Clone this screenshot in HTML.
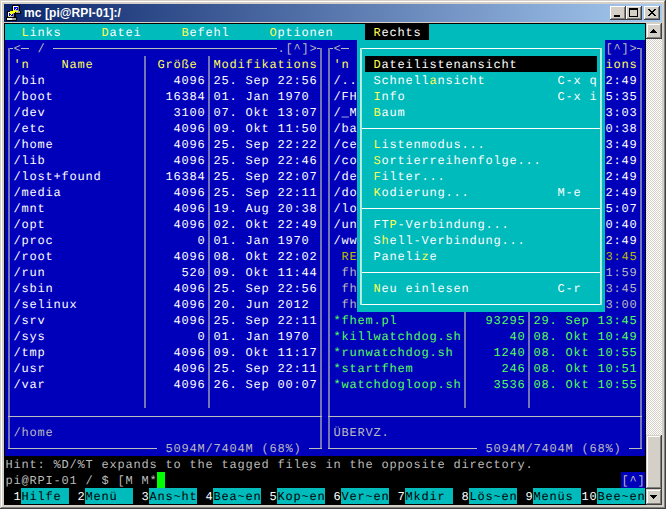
<!DOCTYPE html><html><head><meta charset="utf-8"><style>
*{margin:0;padding:0;box-sizing:border-box}
html,body{width:666px;height:509px;overflow:hidden;background:#D4D0C8}
.a{position:absolute}
.t{position:absolute;height:16px;overflow:hidden;white-space:pre;font-family:"Liberation Mono",monospace;font-size:12px;letter-spacing:0.8px;text-rendering:geometricPrecision;line-height:18px;text-indent:0.4px}
</style></head><body>

<div class="a" style="left:1px;top:1px;width:664px;height:1px;background:#fff"></div>
<div class="a" style="left:1px;top:1px;width:1px;height:506px;background:#fff"></div>
<div class="a" style="left:665px;top:0;width:1px;height:509px;background:#404040"></div>
<div class="a" style="left:0;top:508px;width:666px;height:1px;background:#404040"></div>
<div class="a" style="left:664px;top:1px;width:1px;height:507px;background:#808080"></div>
<div class="a" style="left:1px;top:507px;width:664px;height:1px;background:#808080"></div>
<div class="a" style="left:4px;top:4px;width:658px;height:18px;background:linear-gradient(to right,#0A246A,#A6CAF0)"></div>
<div class="a" style="left:24px;top:4px;height:18px;line-height:18px;font-family:'Liberation Sans',sans-serif;font-weight:bold;font-size:12px;letter-spacing:0.08px;color:#fff;white-space:pre">mc [pi@RPI-01]:/</div>
<svg class="a" style="left:0;top:0" width="24" height="24" viewBox="0 0 24 24" shape-rendering="crispEdges"><rect x="12" y="5" width="8" height="9" fill="#000"/><rect x="15" y="11" width="6" height="3" fill="#000"/><rect x="13" y="6" width="6" height="5" fill="#c0c0c0"/><rect x="13" y="6" width="5" height="1" fill="#fff"/><rect x="13" y="6" width="1" height="4" fill="#fff"/><rect x="18" y="6" width="1" height="5" fill="#808080"/><rect x="14" y="7" width="4" height="3" fill="#0000ff"/><rect x="16" y="11" width="4" height="2" fill="#a0a0a0"/><rect x="7" y="11" width="9" height="7" fill="#000"/><rect x="6" y="17" width="11" height="4" fill="#000"/><rect x="8" y="12" width="6" height="5" fill="#c0c0c0"/><rect x="8" y="12" width="5" height="1" fill="#fff"/><rect x="8" y="12" width="1" height="4" fill="#fff"/><rect x="13" y="12" width="1" height="5" fill="#808080"/><rect x="9" y="13" width="4" height="3" fill="#0000ff"/><rect x="7" y="18" width="5" height="2" fill="#f0f0f0"/><rect x="12" y="18" width="4" height="2" fill="#a0a0a0"/><rect x="16" y="8" width="1" height="1" fill="#ffff00"/><rect x="15" y="9" width="1" height="1" fill="#ffff00"/><rect x="13" y="10" width="2" height="1" fill="#ffff00"/><rect x="10" y="11" width="8" height="1" fill="#ffff00"/><rect x="10" y="12" width="5" height="1" fill="#ffff00"/><rect x="10" y="13" width="3" height="1" fill="#ffff00"/><rect x="11" y="14" width="1" height="1" fill="#ffff00"/><rect x="10" y="15" width="1" height="1" fill="#ffff00"/><rect x="9" y="16" width="1" height="1" fill="#ffff00"/></svg>
<div class="a" style="left:610px;top:6px;width:16px;height:14px;background:#D4D0C8;box-shadow:inset -1px -1px #404040,inset 1px 1px #fff,inset -2px -2px #808080,inset 2px 2px #D4D0C8"><div class="a" style="left:4px;top:9px;width:6px;height:2px;background:#000"></div></div>
<div class="a" style="left:626px;top:6px;width:16px;height:14px;background:#D4D0C8;box-shadow:inset -1px -1px #404040,inset 1px 1px #fff,inset -2px -2px #808080,inset 2px 2px #D4D0C8"><div class="a" style="left:3px;top:2px;width:9px;height:9px;border:1px solid #000;border-top-width:2px"></div></div>
<div class="a" style="left:644px;top:6px;width:16px;height:14px;background:#D4D0C8;box-shadow:inset -1px -1px #404040,inset 1px 1px #fff,inset -2px -2px #808080,inset 2px 2px #D4D0C8"><svg class="a" style="left:4px;top:3px" width="8" height="7" shape-rendering="crispEdges" fill="#000"><rect x="0" y="0" width="1" height="1"/><rect x="1" y="0" width="1" height="1"/><rect x="6" y="0" width="1" height="1"/><rect x="7" y="0" width="1" height="1"/><rect x="1" y="1" width="1" height="1"/><rect x="2" y="1" width="1" height="1"/><rect x="5" y="1" width="1" height="1"/><rect x="6" y="1" width="1" height="1"/><rect x="2" y="2" width="1" height="1"/><rect x="3" y="2" width="1" height="1"/><rect x="4" y="2" width="1" height="1"/><rect x="5" y="2" width="1" height="1"/><rect x="3" y="3" width="1" height="1"/><rect x="4" y="3" width="1" height="1"/><rect x="2" y="4" width="1" height="1"/><rect x="3" y="4" width="1" height="1"/><rect x="4" y="4" width="1" height="1"/><rect x="5" y="4" width="1" height="1"/><rect x="1" y="5" width="1" height="1"/><rect x="2" y="5" width="1" height="1"/><rect x="5" y="5" width="1" height="1"/><rect x="6" y="5" width="1" height="1"/><rect x="0" y="6" width="1" height="1"/><rect x="1" y="6" width="1" height="1"/><rect x="6" y="6" width="1" height="1"/><rect x="7" y="6" width="1" height="1"/></svg></div>
<div class="a" style="left:4px;top:23px;width:642px;height:482px;background:#000"></div>
<div class="a" style="left:5px;top:24px;width:16px;height:16px;background:#00BBBB"></div>
<div class="t" style="left:21px;top:24px;width:8px;background:#00BBBB;color:#FFFF55">L</div>
<div class="t" style="left:29px;top:24px;width:72px;background:#00BBBB;color:#FFFFFF">inks     </div>
<div class="t" style="left:101px;top:24px;width:8px;background:#00BBBB;color:#FFFF55">D</div>
<div class="t" style="left:109px;top:24px;width:72px;background:#00BBBB;color:#FFFFFF">atei     </div>
<div class="t" style="left:181px;top:24px;width:8px;background:#00BBBB;color:#FFFF55">B</div>
<div class="t" style="left:189px;top:24px;width:80px;background:#00BBBB;color:#FFFFFF">efehl     </div>
<div class="t" style="left:269px;top:24px;width:8px;background:#00BBBB;color:#FFFF55">O</div>
<div class="t" style="left:277px;top:24px;width:88px;background:#00BBBB;color:#FFFFFF">ptionen    </div>
<div class="a" style="left:365px;top:24px;width:8px;height:16px;background:#000000"></div>
<div class="t" style="left:373px;top:24px;width:8px;background:#000000;color:#FFFF55">R</div>
<div class="t" style="left:381px;top:24px;width:48px;background:#000000;color:#FFFFFF">echts </div>
<div class="a" style="left:429px;top:24px;width:216px;height:16px;background:#00BBBB"></div>
<div class="t" style="left:5px;top:40px;width:352px;background:#0000BB;color:#BBBBBB"> &lt;  /                             .[^]&gt;  &lt;  </div>
<div class="a" style="left:357px;top:40px;width:248px;height:16px;background:#00BBBB"></div>
<div class="t" style="left:605px;top:40px;width:40px;background:#0000BB;color:#BBBBBB">[^]&gt; </div>
<div class="a" style="left:5px;top:56px;width:8px;height:16px;background:#0000BB"></div>
<div class="t" style="left:13px;top:56px;width:344px;background:#0000BB;color:#FFFF55">'n    Name        Größe  Modifikations  'n </div>
<div class="a" style="left:357px;top:56px;width:8px;height:16px;background:#00BBBB"></div>
<div class="a" style="left:365px;top:56px;width:8px;height:16px;background:#000000"></div>
<div class="t" style="left:373px;top:56px;width:8px;background:#000000;color:#FFFF55">D</div>
<div class="t" style="left:381px;top:56px;width:216px;background:#000000;color:#FFFFFF">ateilistenansicht          </div>
<div class="a" style="left:597px;top:56px;width:8px;height:16px;background:#00BBBB"></div>
<div class="t" style="left:605px;top:56px;width:40px;background:#0000BB;color:#FFFF55">ions </div>
<div class="a" style="left:5px;top:72px;width:8px;height:16px;background:#0000BB"></div>
<div class="t" style="left:13px;top:72px;width:344px;background:#0000BB;color:#FFFFFF">/bin                4096 25. Sep 22:56  /..</div>
<div class="a" style="left:357px;top:72px;width:16px;height:16px;background:#00BBBB"></div>
<div class="t" style="left:373px;top:72px;width:56px;background:#00BBBB;color:#FFFFFF">Schnell</div>
<div class="t" style="left:429px;top:72px;width:8px;background:#00BBBB;color:#FFFF55">a</div>
<div class="t" style="left:437px;top:72px;width:168px;background:#00BBBB;color:#FFFFFF">nsicht         C-x q </div>
<div class="t" style="left:605px;top:72px;width:40px;background:#0000BB;color:#FFFFFF">2:49 </div>
<div class="a" style="left:5px;top:88px;width:8px;height:16px;background:#0000BB"></div>
<div class="t" style="left:13px;top:88px;width:344px;background:#0000BB;color:#FFFFFF">/boot              16384 01. Jan 1970   /FH</div>
<div class="a" style="left:357px;top:88px;width:16px;height:16px;background:#00BBBB"></div>
<div class="t" style="left:373px;top:88px;width:8px;background:#00BBBB;color:#FFFF55">I</div>
<div class="t" style="left:381px;top:88px;width:224px;background:#00BBBB;color:#FFFFFF">nfo                   C-x i </div>
<div class="t" style="left:605px;top:88px;width:40px;background:#0000BB;color:#FFFFFF">5:35 </div>
<div class="a" style="left:5px;top:104px;width:8px;height:16px;background:#0000BB"></div>
<div class="t" style="left:13px;top:104px;width:344px;background:#0000BB;color:#FFFFFF">/dev                3100 07. Okt 13:07  /_M</div>
<div class="a" style="left:357px;top:104px;width:16px;height:16px;background:#00BBBB"></div>
<div class="t" style="left:373px;top:104px;width:8px;background:#00BBBB;color:#FFFF55">B</div>
<div class="t" style="left:381px;top:104px;width:224px;background:#00BBBB;color:#FFFFFF">aum                         </div>
<div class="t" style="left:605px;top:104px;width:40px;background:#0000BB;color:#FFFFFF">3:03 </div>
<div class="a" style="left:5px;top:120px;width:8px;height:16px;background:#0000BB"></div>
<div class="t" style="left:13px;top:120px;width:344px;background:#0000BB;color:#FFFFFF">/etc                4096 09. Okt 11:50  /ba</div>
<div class="a" style="left:357px;top:120px;width:248px;height:16px;background:#00BBBB"></div>
<div class="t" style="left:605px;top:120px;width:40px;background:#0000BB;color:#FFFFFF">0:38 </div>
<div class="a" style="left:5px;top:136px;width:8px;height:16px;background:#0000BB"></div>
<div class="t" style="left:13px;top:136px;width:344px;background:#0000BB;color:#FFFFFF">/home               4096 25. Sep 22:22  /ce</div>
<div class="a" style="left:357px;top:136px;width:16px;height:16px;background:#00BBBB"></div>
<div class="t" style="left:373px;top:136px;width:8px;background:#00BBBB;color:#FFFF55">L</div>
<div class="t" style="left:381px;top:136px;width:224px;background:#00BBBB;color:#FFFFFF">istenmodus...               </div>
<div class="t" style="left:605px;top:136px;width:40px;background:#0000BB;color:#FFFFFF">3:49 </div>
<div class="a" style="left:5px;top:152px;width:8px;height:16px;background:#0000BB"></div>
<div class="t" style="left:13px;top:152px;width:344px;background:#0000BB;color:#FFFFFF">/lib                4096 25. Sep 22:46  /co</div>
<div class="a" style="left:357px;top:152px;width:16px;height:16px;background:#00BBBB"></div>
<div class="t" style="left:373px;top:152px;width:8px;background:#00BBBB;color:#FFFF55">S</div>
<div class="t" style="left:381px;top:152px;width:224px;background:#00BBBB;color:#FFFFFF">ortierreihenfolge...        </div>
<div class="t" style="left:605px;top:152px;width:40px;background:#0000BB;color:#FFFFFF">2:49 </div>
<div class="a" style="left:5px;top:168px;width:8px;height:16px;background:#0000BB"></div>
<div class="t" style="left:13px;top:168px;width:344px;background:#0000BB;color:#FFFFFF">/lost+found        16384 25. Sep 22:07  /de</div>
<div class="a" style="left:357px;top:168px;width:16px;height:16px;background:#00BBBB"></div>
<div class="t" style="left:373px;top:168px;width:8px;background:#00BBBB;color:#FFFF55">F</div>
<div class="t" style="left:381px;top:168px;width:224px;background:#00BBBB;color:#FFFFFF">ilter...                    </div>
<div class="t" style="left:605px;top:168px;width:40px;background:#0000BB;color:#FFFFFF">2:49 </div>
<div class="a" style="left:5px;top:184px;width:8px;height:16px;background:#0000BB"></div>
<div class="t" style="left:13px;top:184px;width:344px;background:#0000BB;color:#FFFFFF">/media              4096 25. Sep 22:11  /do</div>
<div class="a" style="left:357px;top:184px;width:16px;height:16px;background:#00BBBB"></div>
<div class="t" style="left:373px;top:184px;width:8px;background:#00BBBB;color:#FFFF55">K</div>
<div class="t" style="left:381px;top:184px;width:224px;background:#00BBBB;color:#FFFFFF">odierung...           M-e   </div>
<div class="t" style="left:605px;top:184px;width:40px;background:#0000BB;color:#FFFFFF">2:49 </div>
<div class="a" style="left:5px;top:200px;width:8px;height:16px;background:#0000BB"></div>
<div class="t" style="left:13px;top:200px;width:344px;background:#0000BB;color:#FFFFFF">/mnt                4096 19. Aug 20:38  /lo</div>
<div class="a" style="left:357px;top:200px;width:248px;height:16px;background:#00BBBB"></div>
<div class="t" style="left:605px;top:200px;width:40px;background:#0000BB;color:#FFFFFF">5:07 </div>
<div class="a" style="left:5px;top:216px;width:8px;height:16px;background:#0000BB"></div>
<div class="t" style="left:13px;top:216px;width:344px;background:#0000BB;color:#FFFFFF">/opt                4096 02. Okt 22:49  /un</div>
<div class="a" style="left:357px;top:216px;width:16px;height:16px;background:#00BBBB"></div>
<div class="t" style="left:373px;top:216px;width:16px;background:#00BBBB;color:#FFFFFF">FT</div>
<div class="t" style="left:389px;top:216px;width:8px;background:#00BBBB;color:#FFFF55">P</div>
<div class="t" style="left:397px;top:216px;width:208px;background:#00BBBB;color:#FFFFFF">-Verbindung...            </div>
<div class="t" style="left:605px;top:216px;width:40px;background:#0000BB;color:#FFFFFF">0:40 </div>
<div class="a" style="left:5px;top:232px;width:8px;height:16px;background:#0000BB"></div>
<div class="t" style="left:13px;top:232px;width:344px;background:#0000BB;color:#FFFFFF">/proc                  0 01. Jan 1970   /ww</div>
<div class="a" style="left:357px;top:232px;width:16px;height:16px;background:#00BBBB"></div>
<div class="t" style="left:373px;top:232px;width:8px;background:#00BBBB;color:#FFFFFF">S</div>
<div class="t" style="left:381px;top:232px;width:8px;background:#00BBBB;color:#FFFF55">h</div>
<div class="t" style="left:389px;top:232px;width:216px;background:#00BBBB;color:#FFFFFF">ell-Verbindung...          </div>
<div class="t" style="left:605px;top:232px;width:40px;background:#0000BB;color:#FFFFFF">2:49 </div>
<div class="a" style="left:5px;top:248px;width:8px;height:16px;background:#0000BB"></div>
<div class="t" style="left:13px;top:248px;width:328px;background:#0000BB;color:#FFFFFF">/root               4096 08. Okt 22:02   </div>
<div class="t" style="left:341px;top:248px;width:16px;background:#0000BB;color:#BBBB00">RE</div>
<div class="a" style="left:357px;top:248px;width:16px;height:16px;background:#00BBBB"></div>
<div class="t" style="left:373px;top:248px;width:48px;background:#00BBBB;color:#FFFFFF">Paneli</div>
<div class="t" style="left:421px;top:248px;width:8px;background:#00BBBB;color:#FFFF55">z</div>
<div class="t" style="left:429px;top:248px;width:176px;background:#00BBBB;color:#FFFFFF">e                     </div>
<div class="t" style="left:605px;top:248px;width:40px;background:#0000BB;color:#BBBB00">3:45 </div>
<div class="a" style="left:5px;top:264px;width:8px;height:16px;background:#0000BB"></div>
<div class="t" style="left:13px;top:264px;width:328px;background:#0000BB;color:#FFFFFF">/run                 520 09. Okt 11:44   </div>
<div class="t" style="left:341px;top:264px;width:16px;background:#0000BB;color:#BBBBBB">fh</div>
<div class="a" style="left:357px;top:264px;width:248px;height:16px;background:#00BBBB"></div>
<div class="t" style="left:605px;top:264px;width:40px;background:#0000BB;color:#BBBBBB">1:59 </div>
<div class="a" style="left:5px;top:280px;width:8px;height:16px;background:#0000BB"></div>
<div class="t" style="left:13px;top:280px;width:328px;background:#0000BB;color:#FFFFFF">/sbin               4096 25. Sep 22:56   </div>
<div class="t" style="left:341px;top:280px;width:16px;background:#0000BB;color:#BBBBBB">fh</div>
<div class="a" style="left:357px;top:280px;width:16px;height:16px;background:#00BBBB"></div>
<div class="t" style="left:373px;top:280px;width:8px;background:#00BBBB;color:#FFFF55">N</div>
<div class="t" style="left:381px;top:280px;width:224px;background:#00BBBB;color:#FFFFFF">eu einlesen           C-r   </div>
<div class="t" style="left:605px;top:280px;width:40px;background:#0000BB;color:#BBBBBB">3:45 </div>
<div class="a" style="left:5px;top:296px;width:8px;height:16px;background:#0000BB"></div>
<div class="t" style="left:13px;top:296px;width:328px;background:#0000BB;color:#FFFFFF">/selinux            4096 20. Jun 2012    </div>
<div class="t" style="left:341px;top:296px;width:16px;background:#0000BB;color:#BBBBBB">fh</div>
<div class="a" style="left:357px;top:296px;width:248px;height:16px;background:#00BBBB"></div>
<div class="t" style="left:605px;top:296px;width:40px;background:#0000BB;color:#BBBBBB">3:00 </div>
<div class="a" style="left:5px;top:312px;width:8px;height:16px;background:#0000BB"></div>
<div class="t" style="left:13px;top:312px;width:320px;background:#0000BB;color:#FFFFFF">/srv                4096 25. Sep 22:11  </div>
<div class="t" style="left:333px;top:312px;width:312px;background:#0000BB;color:#55FF55">*fhem.pl           93295 29. Sep 13:45 </div>
<div class="a" style="left:5px;top:328px;width:8px;height:16px;background:#0000BB"></div>
<div class="t" style="left:13px;top:328px;width:320px;background:#0000BB;color:#FFFFFF">/sys                   0 01. Jan 1970   </div>
<div class="t" style="left:333px;top:328px;width:312px;background:#0000BB;color:#55FF55">*killwatchdog.sh      40 08. Okt 10:49 </div>
<div class="a" style="left:5px;top:344px;width:8px;height:16px;background:#0000BB"></div>
<div class="t" style="left:13px;top:344px;width:320px;background:#0000BB;color:#FFFFFF">/tmp                4096 09. Okt 11:17  </div>
<div class="t" style="left:333px;top:344px;width:312px;background:#0000BB;color:#55FF55">*runwatchdog.sh     1240 08. Okt 10:55 </div>
<div class="a" style="left:5px;top:360px;width:8px;height:16px;background:#0000BB"></div>
<div class="t" style="left:13px;top:360px;width:320px;background:#0000BB;color:#FFFFFF">/usr                4096 25. Sep 22:11  </div>
<div class="t" style="left:333px;top:360px;width:312px;background:#0000BB;color:#55FF55">*startfhem           246 08. Okt 10:51 </div>
<div class="a" style="left:5px;top:376px;width:8px;height:16px;background:#0000BB"></div>
<div class="t" style="left:13px;top:376px;width:320px;background:#0000BB;color:#FFFFFF">/var                4096 26. Sep 00:07  </div>
<div class="t" style="left:333px;top:376px;width:312px;background:#0000BB;color:#55FF55">*watchdogloop.sh    3536 08. Okt 10:55 </div>
<div class="a" style="left:5px;top:392px;width:640px;height:16px;background:#0000BB"></div>
<div class="a" style="left:5px;top:408px;width:640px;height:16px;background:#0000BB"></div>
<div class="t" style="left:5px;top:424px;width:640px;background:#0000BB;color:#BBBBBB"> /home                                   ÜBERVZ.                                </div>
<div class="t" style="left:5px;top:440px;width:640px;background:#0000BB;color:#BBBBBB">                    5094M/7404M (68%)                       5094M/7404M (68%)   </div>
<div class="t" style="left:5px;top:456px;width:640px;background:#000000;color:#BBBBBB">Hint: %D/%T expands to the tagged files in the opposite directory.              </div>
<div class="t" style="left:5px;top:472px;width:152px;background:#000000;color:#BBBBBB">pi@RPI-01 / $ [M M*</div>
<div class="a" style="left:157px;top:472px;width:8px;height:16px;background:#00FF00"></div>
<div class="a" style="left:165px;top:472px;width:456px;height:16px;background:#000000"></div>
<div class="t" style="left:621px;top:472px;width:24px;background:#0000BB;color:#BBBBBB">[^]</div>
<div class="t" style="left:5px;top:488px;width:16px;background:#000000;color:#FFFFFF"> 1</div>
<div class="t" style="left:21px;top:488px;width:48px;background:#00BBBB;color:#000000">Hilfe </div>
<div class="t" style="left:69px;top:488px;width:16px;background:#000000;color:#FFFFFF"> 2</div>
<div class="t" style="left:85px;top:488px;width:48px;background:#00BBBB;color:#000000">Menü  </div>
<div class="t" style="left:133px;top:488px;width:16px;background:#000000;color:#FFFFFF"> 3</div>
<div class="t" style="left:149px;top:488px;width:48px;background:#00BBBB;color:#000000">Ans~ht</div>
<div class="t" style="left:197px;top:488px;width:16px;background:#000000;color:#FFFFFF"> 4</div>
<div class="t" style="left:213px;top:488px;width:48px;background:#00BBBB;color:#000000">Bea~en</div>
<div class="t" style="left:261px;top:488px;width:16px;background:#000000;color:#FFFFFF"> 5</div>
<div class="t" style="left:277px;top:488px;width:48px;background:#00BBBB;color:#000000">Kop~en</div>
<div class="t" style="left:325px;top:488px;width:16px;background:#000000;color:#FFFFFF"> 6</div>
<div class="t" style="left:341px;top:488px;width:48px;background:#00BBBB;color:#000000">Ver~en</div>
<div class="t" style="left:389px;top:488px;width:16px;background:#000000;color:#FFFFFF"> 7</div>
<div class="t" style="left:405px;top:488px;width:48px;background:#00BBBB;color:#000000">Mkdir </div>
<div class="t" style="left:453px;top:488px;width:16px;background:#000000;color:#FFFFFF"> 8</div>
<div class="t" style="left:469px;top:488px;width:48px;background:#00BBBB;color:#000000">Lös~en</div>
<div class="t" style="left:517px;top:488px;width:16px;background:#000000;color:#FFFFFF"> 9</div>
<div class="t" style="left:533px;top:488px;width:48px;background:#00BBBB;color:#000000">Menüs </div>
<div class="t" style="left:581px;top:488px;width:16px;background:#000000;color:#FFFFFF">10</div>
<div class="t" style="left:597px;top:488px;width:48px;background:#00BBBB;color:#000000">Bee~en</div>
<div class="a" style="left:8px;top:48px;width:5px;height:1px;background:#BBBBBB"></div>
<div class="a" style="left:21px;top:48px;width:8px;height:1px;background:#BBBBBB"></div>
<div class="a" style="left:53px;top:48px;width:224px;height:1px;background:#BBBBBB"></div>
<div class="a" style="left:317px;top:48px;width:5px;height:1px;background:#BBBBBB"></div>
<div class="a" style="left:8px;top:48px;width:1px;height:401px;background:#468CB4"></div>
<div class="a" style="left:9px;top:48px;width:1px;height:401px;background:#A05FB9"></div>
<div class="a" style="left:320px;top:48px;width:1px;height:401px;background:#468CB4"></div>
<div class="a" style="left:321px;top:48px;width:1px;height:401px;background:#A05FB9"></div>
<div class="a" style="left:144px;top:56px;width:1px;height:352px;background:#468CB4"></div>
<div class="a" style="left:145px;top:56px;width:1px;height:352px;background:#A05FB9"></div>
<div class="a" style="left:208px;top:56px;width:1px;height:352px;background:#468CB4"></div>
<div class="a" style="left:209px;top:56px;width:1px;height:352px;background:#A05FB9"></div>
<div class="a" style="left:8px;top:416px;width:314px;height:1px;background:#BBBBBB"></div>
<div class="a" style="left:8px;top:448px;width:149px;height:1px;background:#BBBBBB"></div>
<div class="a" style="left:309px;top:448px;width:13px;height:1px;background:#BBBBBB"></div>
<div class="a" style="left:328px;top:48px;width:5px;height:1px;background:#BBBBBB"></div>
<div class="a" style="left:341px;top:48px;width:8px;height:1px;background:#BBBBBB"></div>
<div class="a" style="left:637px;top:48px;width:5px;height:1px;background:#BBBBBB"></div>
<div class="a" style="left:328px;top:48px;width:1px;height:401px;background:#468CB4"></div>
<div class="a" style="left:329px;top:48px;width:1px;height:401px;background:#A05FB9"></div>
<div class="a" style="left:640px;top:48px;width:1px;height:401px;background:#468CB4"></div>
<div class="a" style="left:641px;top:48px;width:1px;height:401px;background:#A05FB9"></div>
<div class="a" style="left:464px;top:312px;width:1px;height:96px;background:#468CB4"></div>
<div class="a" style="left:465px;top:312px;width:1px;height:96px;background:#A05FB9"></div>
<div class="a" style="left:528px;top:312px;width:1px;height:96px;background:#468CB4"></div>
<div class="a" style="left:529px;top:312px;width:1px;height:96px;background:#A05FB9"></div>
<div class="a" style="left:328px;top:416px;width:314px;height:1px;background:#BBBBBB"></div>
<div class="a" style="left:328px;top:448px;width:149px;height:1px;background:#BBBBBB"></div>
<div class="a" style="left:629px;top:448px;width:13px;height:1px;background:#BBBBBB"></div>
<div class="a" style="left:360px;top:48px;width:242px;height:1px;background:#fff"></div>
<div class="a" style="left:360px;top:128px;width:242px;height:1px;background:#fff"></div>
<div class="a" style="left:360px;top:208px;width:242px;height:1px;background:#fff"></div>
<div class="a" style="left:360px;top:272px;width:242px;height:1px;background:#fff"></div>
<div class="a" style="left:360px;top:304px;width:242px;height:1px;background:#fff"></div>
<div class="a" style="left:360px;top:48px;width:1px;height:257px;background:#90FFFF"></div>
<div class="a" style="left:361px;top:48px;width:1px;height:257px;background:#D8D8C8"></div>
<div class="a" style="left:600px;top:48px;width:1px;height:257px;background:#90FFFF"></div>
<div class="a" style="left:601px;top:48px;width:1px;height:257px;background:#D8D8C8"></div>
<div class="a" style="left:646px;top:23px;width:16px;height:482px;background-color:#fff;background-image:repeating-conic-gradient(#D4D0C8 0 25%,#fff 0 50%);background-size:2px 2px"></div>
<div class="a" style="left:646px;top:23px;width:16px;height:16px;background:#D4D0C8;box-shadow:inset -1px -1px #404040,inset 1px 1px #D4D0C8,inset -2px -2px #808080,inset 2px 2px #fff"><svg class="a" style="left:4px;top:6px" width="7" height="4" shape-rendering="crispEdges"><path d="M3 0h1v1h1v1h1v1h1v1h-7v-1h1v-1h1v-1h1z" fill="#000"/></svg></div>
<div class="a" style="left:646px;top:435px;width:16px;height:54px;background:#D4D0C8;box-shadow:inset -1px -1px #404040,inset 1px 1px #D4D0C8,inset -2px -2px #808080,inset 2px 2px #fff"></div>
<div class="a" style="left:646px;top:489px;width:16px;height:16px;background:#D4D0C8;box-shadow:inset -1px -1px #404040,inset 1px 1px #D4D0C8,inset -2px -2px #808080,inset 2px 2px #fff"><svg class="a" style="left:4px;top:6px" width="7" height="4" shape-rendering="crispEdges"><path d="M0 0h7v1h-1v1h-1v1h-1v1h-1v-1h-1v-1h-1v-1h-1z" fill="#000"/></svg></div>
</body></html>
